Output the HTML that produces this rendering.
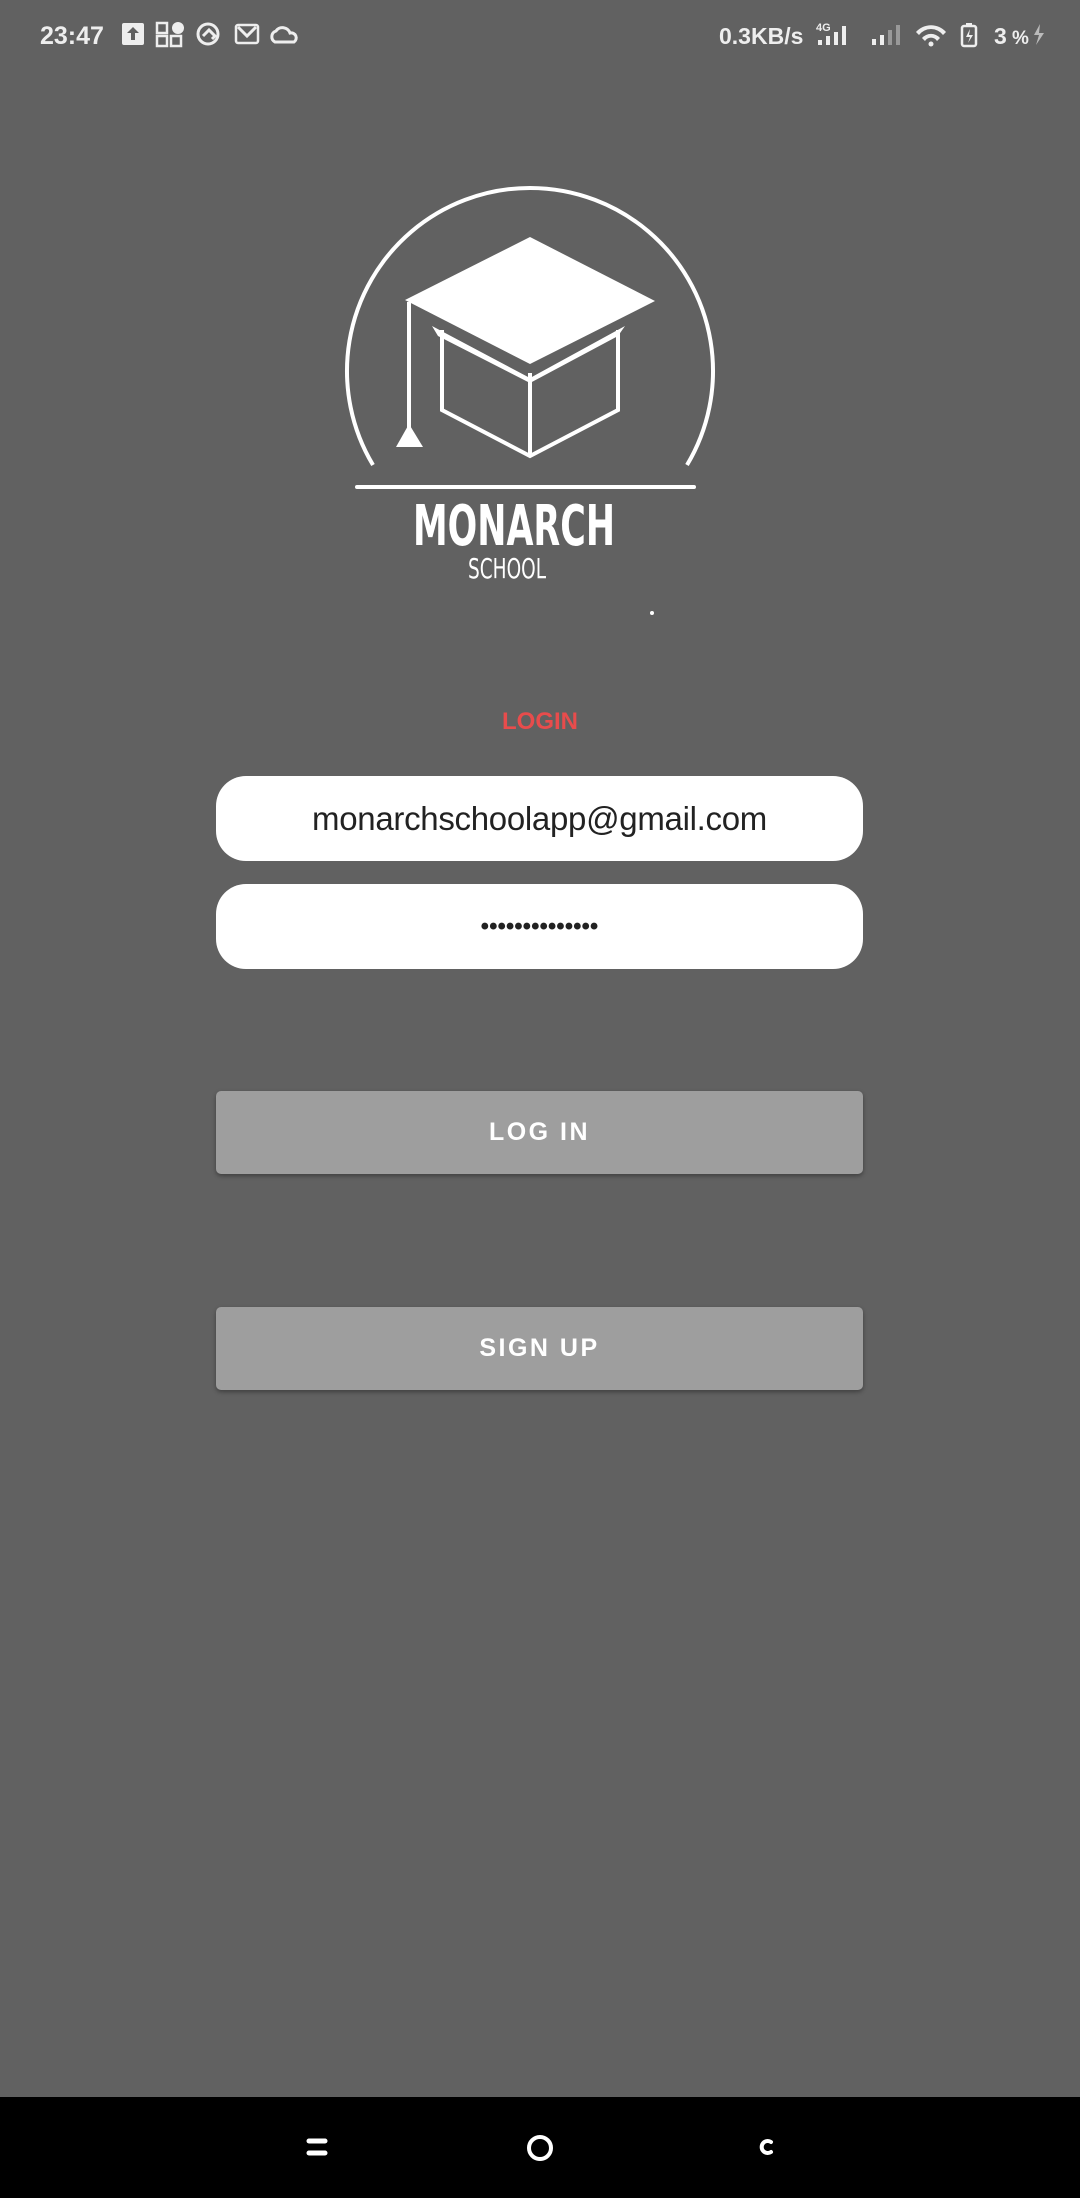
<!DOCTYPE html>
<html><head><meta charset="utf-8"><style>
html,body{margin:0;padding:0}
body{width:1080px;height:2198px;background:#616161;position:relative;overflow:hidden;font-family:"Liberation Sans",sans-serif}
.abs{position:absolute}
.field{position:absolute;left:216px;width:647px;height:85px;background:#fff;border-radius:30px;display:flex;align-items:center;justify-content:center;color:#222;font-size:33px}
.btn{position:absolute;left:216px;width:647px;height:83px;background:#9e9e9e;border-radius:5px;box-shadow:0 2px 4px rgba(0,0,0,.35);display:flex;align-items:center;justify-content:center;color:#fff;font-size:25px;letter-spacing:2.5px;font-weight:bold}
</style></head><body>
<svg class="abs" style="left:0;top:0" width="1080" height="70">
<g fill="#eee" font-family="Liberation Sans" font-weight="bold">
<text x="40" y="44" font-size="25">23:47</text>
<rect x="122" y="23" width="22" height="22" rx="2"/>
<path d="M133 27 l-6 6 h4 v7 h4 v-7 h4z" fill="#616161"/>
<rect x="157" y="23" width="10" height="10" fill="none" stroke="#eee" stroke-width="2.5"/>
<circle cx="178" cy="28" r="6"/>
<rect x="157" y="36" width="10" height="10" fill="none" stroke="#eee" stroke-width="2.5"/>
<rect x="171" y="36" width="10" height="10" fill="none" stroke="#eee" stroke-width="2.5"/>
<circle cx="208" cy="34" r="10" fill="none" stroke="#eee" stroke-width="3"/>
<path d="M203 36 l6 -6 l6 6 l-3 3" fill="none" stroke="#eee" stroke-width="3"/>
<rect x="236" y="25" width="22" height="18" rx="2" fill="none" stroke="#eee" stroke-width="2.5"/>
<path d="M238 27 l9 9 l9 -9" fill="none" stroke="#eee" stroke-width="3"/>
<path d="M275 42 a6 6 0 0 1 1 -11 a8 8 0 0 1 14 2 a5 5 0 0 1 4 9 z" fill="none" stroke="#eee" stroke-width="3"/>
<text x="719" y="44" font-size="23">0.3KB/s</text>
<text x="816" y="31" font-size="11">4G</text>
<rect x="818" y="40" width="4" height="5"/><rect x="826" y="36" width="4" height="9"/><rect x="834" y="32" width="4" height="13"/><rect x="842" y="26" width="4" height="19"/>
<rect x="872" y="39" width="4" height="6"/><rect x="880" y="35" width="4" height="10"/><rect x="888" y="30" width="4" height="15" fill="#999"/><rect x="896" y="25" width="4" height="20" fill="#999"/>
<path d="M916 32 a20 20 0 0 1 30 0 l-3 3 a15 15 0 0 0 -24 0z M922 38 a12 12 0 0 1 18 0 l-3 3 a7 7 0 0 0 -12 0z"/>
<circle cx="931" cy="44" r="2.5"/>
<rect x="962" y="26" width="14" height="20" rx="2" fill="none" stroke="#eee" stroke-width="2.5"/>
<rect x="966" y="23" width="6" height="3"/>
<path d="M970 29 l-4 8 h4 l-2 6 l5 -8 h-4z"/>
<text x="994" y="44" font-size="23">3</text><text x="1012" y="44" font-size="19">%</text>
<path d="M1040 24 l-6 11 h5 l-3 10 l8 -12 h-5z" fill="#bbb"/>
</g></svg>

<svg class="abs" style="left:0;top:0" width="1080" height="700">
<g stroke="#fff" fill="none" stroke-width="4">
<path d="M373 465 A183 183 0 1 1 687 465"/>
<line x1="357" y1="487" x2="694" y2="487" stroke-linecap="round"/>
<path d="M442 330 L442 410 L530 456 L618 410 L618 330 M530 373 L530 456"/>
<path d="M409 302 L409 430"/>
</g>
<path d="M405 300 L530 237 L655 301 L530 364 Z" fill="#fff"/>
<path d="M432 326 L530 378 L625 326 L618 336 L530 383 L438 336Z" fill="#fff"/>
<path d="M409 424 L423 447 L396 447Z" fill="#fff"/>
<text x="413" y="545" font-size="56" fill="#fff" font-family="DejaVu Sans Condensed, Liberation Sans Narrow, Liberation Sans" textLength="202" lengthAdjust="spacingAndGlyphs" font-weight="bold">MONARCH</text>
<text x="468" y="578" font-size="28" fill="#fff" font-family="DejaVu Sans Condensed, Liberation Sans Narrow, Liberation Sans" textLength="78" lengthAdjust="spacingAndGlyphs">SCHOOL</text>
<circle cx="652" cy="613" r="2" fill="#fff"/>
</svg>

<div class="abs" style="left:0;width:1080px;top:708px;text-align:center;color:#e84c4c;font-weight:bold;font-size:24px">LOGIN</div>
<div class="field" style="top:776px;letter-spacing:-0.3px">monarchschoolapp@gmail.com</div>
<div class="field" style="top:884px;font-size:24px;font-weight:bold;letter-spacing:0px">••••••••••••••</div>
<div class="btn" style="top:1091px">LOG IN</div>
<div class="btn" style="top:1307px">SIGN UP</div>

<div class="abs" style="left:0;top:2097px;width:1080px;height:101px;background:#000"></div>
<svg class="abs" style="left:0;top:2097px" width="1080" height="101">
<g stroke="#fff" stroke-width="5" fill="none" stroke-linecap="round">
<line x1="309" y1="44" x2="325" y2="44"/><line x1="309" y1="56" x2="325" y2="56"/>
<circle cx="540" cy="51" r="11" stroke-width="4"/>
<path d="M771 45 a6 6 0 1 0 0 10" stroke-width="4"/>
</g></svg>
</body></html>
